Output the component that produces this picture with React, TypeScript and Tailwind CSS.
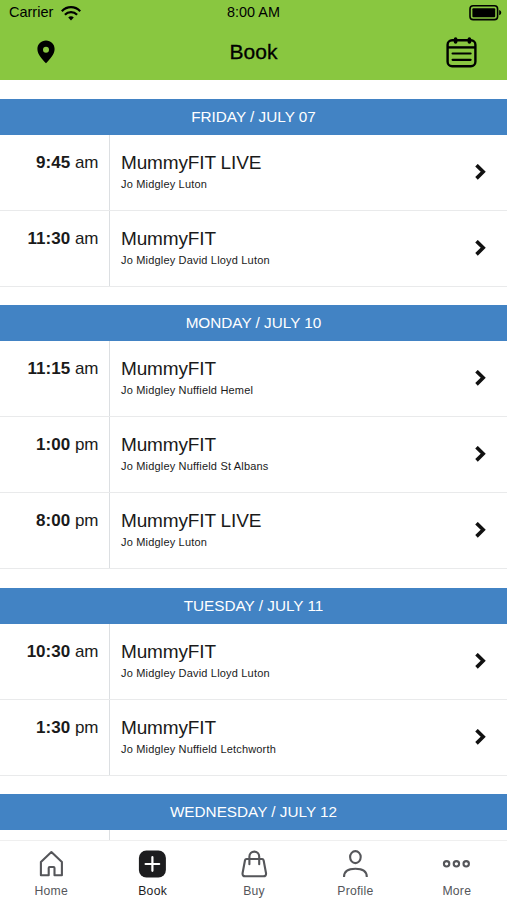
import type { ReactNode } from "react";
import clsx from "clsx";

interface ClassItem {
    time: string;
    period: "am" | "pm";
    title: string;
    detail: string;
}

interface Day {
    label: string;
    classes: ClassItem[];
}

const schedule: Day[] = [
    {
        label: "FRIDAY / JULY 07",
        classes: [
            { time: "9:45", period: "am", title: "MummyFIT LIVE", detail: "Jo Midgley Luton" },
            { time: "11:30", period: "am", title: "MummyFIT", detail: "Jo Midgley David Lloyd Luton" },
        ],
    },
    {
        label: "MONDAY / JULY 10",
        classes: [
            { time: "11:15", period: "am", title: "MummyFIT", detail: "Jo Midgley Nuffield Hemel" },
            { time: "1:00", period: "pm", title: "MummyFIT", detail: "Jo Midgley Nuffield St Albans" },
            { time: "8:00", period: "pm", title: "MummyFIT LIVE", detail: "Jo Midgley Luton" },
        ],
    },
    {
        label: "TUESDAY / JULY 11",
        classes: [
            { time: "10:30", period: "am", title: "MummyFIT", detail: "Jo Midgley David Lloyd Luton" },
            { time: "1:30", period: "pm", title: "MummyFIT", detail: "Jo Midgley Nuffield Letchworth" },
        ],
    },
    {
        label: "WEDNESDAY / JULY 12",
        classes: [{ time: "", period: "am", title: "", detail: "" }],
    },
];

function WifiIcon() {
    return (
        <svg className="w-5 h-[15px]" viewBox="0 0 20 15" fill="none" stroke="black" strokeWidth="2.2">
            <path d="M0.8 5.2C6 -0.2 14 -0.2 19.2 5.2" />
            <path d="M3.9 8.8C7.3 5.2 12.7 5.2 16.1 8.8" />
            <path d="M10 14.6L7.2 11.6C8.8 9.8 11.2 9.8 12.8 11.6Z" fill="black" stroke="none" />
        </svg>
    );
}

function BatteryIcon() {
    return (
        <svg className="w-[33px] h-4" viewBox="0 0 33 16">
            <rect x="1" y="0.8" width="27.6" height="13.8" rx="3.2" fill="none" stroke="black" strokeWidth="1.6" />
            <rect x="3.4" y="3.2" width="22.8" height="9" rx="1" />
            <path d="M30.2 5.1C32.9 6 32.9 9.4 30.2 10.3Z" />
        </svg>
    );
}

function PinIcon() {
    return (
        <svg className="w-[18px] h-6" viewBox="0 0 18 24">
            <path
                fillRule="evenodd"
                d="M9 0.6C4.1 0.6 0.4 4.3 0.4 9C0.4 14.4 5 19 9 23.3C13 19 17.6 14.4 17.6 9C17.6 4.3 13.9 0.6 9 0.6ZM9 6.8A3 3 0 1 1 9 12.8A3 3 0 1 1 9 6.8Z"
            />
        </svg>
    );
}

function CalendarIcon() {
    return (
        <svg className="w-[31px] h-[31px]" viewBox="0 0 31 31" fill="none" stroke="black" strokeWidth="2.4" strokeLinecap="round">
            <rect x="1.6" y="3.3" width="27.8" height="26" rx="4.5" />
            <path d="M1.6 10.4H29.4" strokeLinecap="butt" />
            <path d="M9.6 2.1V4.9M23.4 2.1V4.9" strokeWidth="3.6" />
            <path d="M6.6 16.5H24.6M6.6 22.8H24.6" strokeWidth="2.2" />
        </svg>
    );
}

function ChevronIcon() {
    return (
        <svg className="w-3 h-4" viewBox="0 0 12 16" fill="none" stroke="#111" strokeWidth="3.6">
            <path d="M1.5 1.2L8.2 7.8L1.5 14.4" />
        </svg>
    );
}

function HomeIcon() {
    return (
        <path d="M3.9 12L14.4 2L24.9 12V25.2H17.5V18Q17.5 17 16.5 17H12.7Q11.7 17 11.7 18V25.2H3.9Z" strokeLinejoin="round" />
    );
}

function BookIcon() {
    return (
        <>
            <rect x="0.9" y="0.5" width="27" height="27" rx="7.5" fill="#1d1d1f" stroke="none" />
            <path d="M14.4 7.2V20.8M7.6 14H21.2" stroke="white" strokeWidth="2.2" strokeLinecap="round" />
        </>
    );
}

function BuyIcon() {
    return (
        <>
            <path
                d="M6.5 9H22.1Q23.3 9 23.6 10.2L26 23Q26.5 26.3 23.3 26.3H5.3Q2.1 26.3 2.6 23L5 10.2Q5.3 9 6.5 9Z"
                strokeLinejoin="round"
            />
            <path d="M9.4 14.2V6.5A4.9 4.9 0 0 1 19.2 6.5V14.2" strokeLinecap="round" />
        </>
    );
}

function ProfileIcon() {
    return (
        <>
            <ellipse cx="14.4" cy="7.1" rx="5.3" ry="6" />
            <path d="M3 27C3 21.3 7.4 18.8 14.4 18.8S25.8 21.3 25.8 27" />
        </>
    );
}

function MoreIcon() {
    return (
        <>
            <circle cx="4.6" cy="13.8" r="2.7" />
            <circle cx="14.4" cy="13.8" r="2.7" />
            <circle cx="24.2" cy="13.8" r="2.7" />
        </>
    );
}

const tabs: { label: string; icon: ReactNode; active?: boolean }[] = [
    { label: "Home", icon: <HomeIcon /> },
    { label: "Book", icon: <BookIcon />, active: true },
    { label: "Buy", icon: <BuyIcon /> },
    { label: "Profile", icon: <ProfileIcon /> },
    { label: "More", icon: <MoreIcon /> },
];

function Header() {
    return (
        <header className="h-20 shrink-0 bg-[#89c740] text-black">
            <div className="grid grid-cols-3 items-center h-6 pt-px pl-[9px] pr-[5px]">
                <div className="flex items-center gap-2 pt-px text-[14.5px]">
                    Carrier
                    <WifiIcon />
                </div>
                <div className="text-center text-[14.4px] pr-1">8:00 AM</div>
                <div className="flex justify-end">
                    <BatteryIcon />
                </div>
            </div>
            <div className="grid grid-cols-3 items-center h-14 pl-[37px] pr-[30px]">
                <PinIcon />
                <h1 className="text-center text-[21px] pr-[7px] [-webkit-text-stroke:0.3px_black]">Book</h1>
                <div className="flex justify-end">
                    <CalendarIcon />
                </div>
            </div>
        </header>
    );
}

function ClassRow({ item }: { item: ClassItem }) {
    return (
        <div className="flex h-[76px] border-b border-[#e9eaeb] text-[#1a1a1a]">
            <div className="w-[110px] shrink-0 border-r border-[#dcdfe2] pt-4 pr-[10.5px] text-right text-[17px] leading-6">
                {item.time && (
                    <>
                        <b>{item.time}</b> {item.period}
                    </>
                )}
            </div>
            <div className="flex-1 pt-4 pl-[11px]">
                <div className="text-[19px] leading-6 tracking-[-0.15px]">{item.title}</div>
                <div className="text-[11px] leading-[19px] tracking-[0.18px]">{item.detail}</div>
            </div>
            <div className="pt-[29px] pr-[20px]">
                <ChevronIcon />
            </div>
        </div>
    );
}

function DaySection({ day }: { day: Day }) {
    return (
        <section className="mb-[18.5px]">
            <h2 className="h-9 bg-[#4283c4] text-center text-[15.3px] leading-[35.8px] text-white">{day.label}</h2>
            {day.classes.map((item) => (
                <ClassRow key={item.time} item={item} />
            ))}
        </section>
    );
}

function TabBar() {
    return (
        <nav className="flex h-[60px] shrink-0 border-t border-[#efefef] bg-white">
            {tabs.map((tab) => (
                <div
                    key={tab.label}
                    className={clsx("flex flex-1 flex-col items-center pt-[9px]", tab.active ? "text-[#1d1d1f]" : "text-[#55565a]")}
                >
                    <svg className="size-7 overflow-visible" viewBox="0 0 28 28" fill="none" stroke="currentColor" strokeWidth="2.1">
                        {tab.icon}
                    </svg>
                    <span className="mt-[5px] pl-px text-[12.2px] leading-4 tracking-[0.25px]">{tab.label}</span>
                </div>
            ))}
        </nav>
    );
}

export default function App() {
    return (
        <div className="flex flex-col h-[900px] w-full overflow-hidden bg-white font-['Liberation_Sans',Arial,sans-serif]">
            <Header />
            <main className="flex-1 min-h-0 overflow-hidden pt-[18.5px]">
                {schedule.map((day) => (
                    <DaySection key={day.label} day={day} />
                ))}
            </main>
            <TabBar />
        </div>
    );
}
